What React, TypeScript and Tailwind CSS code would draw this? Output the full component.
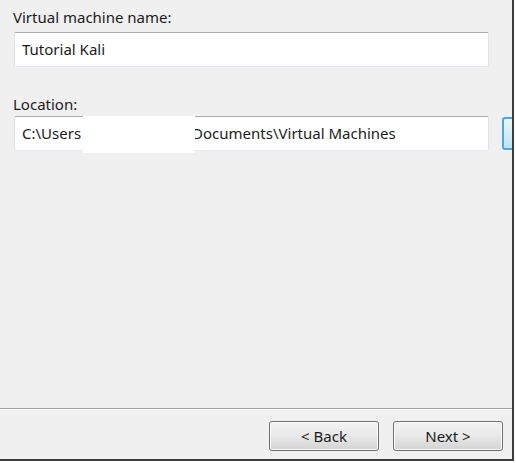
const font = { fontFamily: '"Noto Sans", "Liberation Sans", sans-serif' }

function TextBox({ children }: { children: React.ReactNode }) {
  return (
    <div className="relative flex h-[35px] w-[475px] shrink-0 items-center rounded-[2px] border border-t-[#abadb3] border-x-[#dfe3ea] border-b-[#e3e9ef] bg-white pl-[7px] text-[15px] text-[#1b1b1b]">
      {children}
    </div>
  )
}

function WizardButton({ label }: { label: string }) {
  return (
    <button className="h-[30px] w-[110px] rounded-[3px] border border-[#707070] bg-gradient-to-b from-[#f3f3f3] via-[#e9e9e9] to-[#d3d3d3] text-[15px] text-[#1b1b1b] shadow-[inset_0_0_0_1px_#fbfbfb]">
      {label}
    </button>
  )
}

export default function App() {
  return (
    <div className="h-[463px] w-[516px] overflow-hidden bg-white" style={font}>
      <div className="flex h-[461px] w-[514px] flex-col overflow-hidden border-r-2 border-b-2 border-[#3c3c3c] bg-[#f0f0f0]">
        {/* Name + location fields */}
        <div className="flex flex-col pl-[13px] pt-[7px]">
          <label className="text-[15px] leading-[20px] text-[#1b1b1b]">Virtual machine name:</label>
          <div className="mt-[5px] pl-px">
            <TextBox>Tutorial Kali</TextBox>
          </div>

          <label className="mt-[27px] text-[15px] leading-[20px] text-[#1b1b1b]">Location:</label>
          <div className="mt-[2px] flex items-center gap-[13px] pl-px">
            <TextBox>
              <span>C:\Users</span>
              <span className="absolute left-[68px] top-[-1px] h-[37px] w-[112px] bg-white" />
              <span className="ml-[111px]">Documents\Virtual Machines</span>
            </TextBox>
            <div className="h-[33px] w-[30px] shrink-0 rounded-[3px] border-2 border-[#4aa6e6] bg-gradient-to-b from-[#eaf6fd] to-[#bfe4f9]" />
          </div>
        </div>

        <div className="flex-1" />

        {/* Footer */}
        <div className="border-t border-[#a0a0a0]">
          <div className="border-t border-white" />
          <div className="flex justify-end gap-[14px] pr-[9px] pt-[11px] pb-[8px]">
            <WizardButton label="< Back" />
            <WizardButton label="Next >" />
          </div>
        </div>
      </div>
    </div>
  )
}
